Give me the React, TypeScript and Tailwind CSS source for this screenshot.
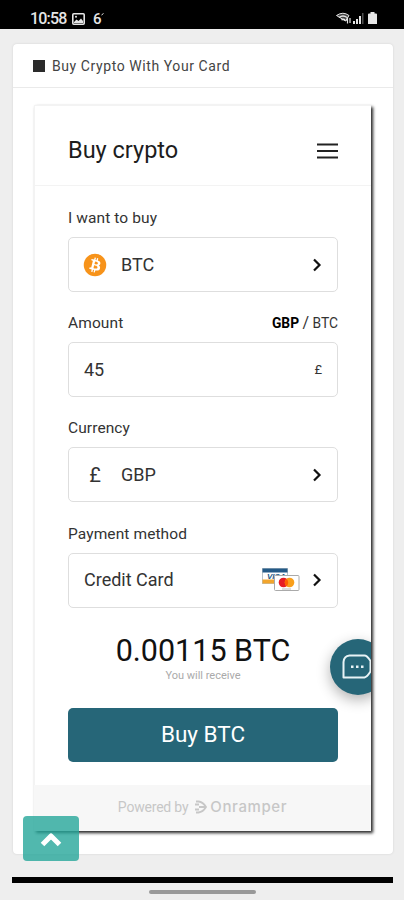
import type { ReactNode } from "react";

function Chevron() {
  return (
    <svg width="10" height="14" viewBox="0 0 10 14" fill="none" className="shrink-0">
      <path d="M2 1.5 7.5 7 2 12.5" stroke="#111" strokeWidth="2.2" />
    </svg>
  );
}

function BitcoinIcon() {
  return (
    <svg width="24" height="24" viewBox="0 0 32 32" className="-ml-px shrink-0">
      <circle cx="16" cy="16" r="15" fill="#f7931a" />
      <path
        fill="#fff"
        d="M23.19 14.02c.31-2.1-1.28-3.22-3.47-3.98l.7-2.84-1.72-.43-.7 2.76-1.38-.33.7-2.78-1.73-.43-.7 2.84-3.48-.87-.46 1.85s1.28.3 1.25.31c.7.18.83.64.8 1.01l-1.97 7.9c-.08.21-.3.53-.78.41.02.03-1.26-.31-1.26-.31L8.14 21.1l3.46.88-.72 2.87 1.73.43.71-2.84 1.38.36-.71 2.83 1.73.43.72-2.87c2.95.56 5.17.33 6.1-2.34.76-2.15-.03-3.39-1.59-4.2 1.13-.26 1.98-1 2.24-2.63Zm-3.95 5.54c-.53 2.15-4.15.99-5.32.7l.95-3.81c1.17.29 4.93.87 4.37 3.11Zm.54-5.57c-.49 1.95-3.5.96-4.47.72l.86-3.46c.97.25 4.12.7 3.61 2.74Z"
      />
    </svg>
  );
}

function CardsIcon() {
  return (
    <svg width="38" height="24" viewBox="0 0 38 24" className="shrink-0">
      <rect x="0.5" y="0.5" width="25" height="15" fill="#fff" stroke="#b9c3c9" />
      <rect x="0.5" y="0.5" width="25" height="4" fill="#245a87" />
      <rect x="0.5" y="11.5" width="13" height="4" fill="#f2a52c" />
      <text x="5" y="10.5" fontSize="8" fontStyle="italic" fontWeight="700" fill="#245a87" className="font-['Liberation_Sans',sans-serif]">
        VISA
      </text>
      <rect x="12.5" y="7.5" width="24.5" height="15" rx="1" fill="#fff" stroke="#aaa" />
      <circle cx="21.5" cy="14.5" r="4.8" fill="#e61c24" />
      <circle cx="27.5" cy="14.5" r="4.8" fill="#f99f1b" />
      <path d="M24.5 10.8a4.8 4.8 0 0 1 0 7.4 4.8 4.8 0 0 1 0-7.4" fill="#ff5f00" />
      <path d="M20 21h9" stroke="#bbb" strokeWidth="1" />
    </svg>
  );
}

function StatusBar() {
  return (
    <div className="flex h-[29px] items-start justify-between bg-black pt-[10px] pr-[26px] pl-[30px] text-[#e6e6e6]">
      <div className="flex items-center text-base leading-[18px] font-medium">
        <span className="w-[36px] tracking-[-0.8px]">10:58</span>
        <svg width="13" height="12" viewBox="0 0 13 12" className="ml-[6px]">
          <rect x="0.8" y="0.8" width="11.4" height="10.4" rx="1" fill="none" stroke="currentColor" strokeWidth="1.6" />
          <path d="M2 9 4.500 6.500 6.500 8 9 5.500 11 8v2H2z" fill="currentColor" />
          <circle cx="4" cy="3.8" r="1" fill="currentColor" />
        </svg>
        <span className="ml-[8px] text-[15px]">6</span>
        <svg width="3" height="4" viewBox="0 0 3 4" className="-ml-px mt-[3px] self-start">
          <path d="M.5 2 2.5.5" stroke="currentColor" />
        </svg>
      </div>
      <div className="flex items-start pt-[2px]">
        <svg width="17" height="13" viewBox="0 0 17 13" fill="none" stroke="currentColor" className="-ml-px">
          <path d="M0.500 3.5Q7-1 13 3.5L9.500 9Z" fill="currentColor" fillOpacity=".3" />
          <path d="M3 5.5q4-3 8 0M5.5 8q2-1.5 3.500 0" strokeWidth="1.4" />
          <path d="m9.500 9 2-2.500v5M14 6v5" strokeWidth="1.2" />
        </svg>
        <svg width="11" height="13" viewBox="0 0 11 13" fill="currentColor">
          <path d="M0 9h2v3H0zM3 7h2v5H3zM6 4h2v8H6z" />
          <path d="M9 1h1.5v11H9z" opacity=".35" />
        </svg>
        <svg width="9" height="13" viewBox="0 0 9 13" className="mr-px ml-[4px]" fill="currentColor">
          <path d="M2.5 0h4v1.5H8a1 1 0 0 1 1 1V12H0V2.5a1 1 0 0 1 1-1h1.5z" />
        </svg>
      </div>
    </div>
  );
}

function Field({ label, extra, children }: { label: string; extra?: ReactNode; children: ReactNode }) {
  return (
    <div className="h-[105.2px]">
      <div className="flex h-[30px] items-start justify-between text-[15.5px] leading-[22px] text-[#333]">
        <span className="tracking-[0.1px]">{label}</span>
        {extra}
      </div>
      <div className="flex h-[55px] items-center rounded-[5px] border border-[#dedede] pr-[15px] pl-[15px] text-lg text-[#333]">
        {children}
      </div>
    </div>
  );
}

function Widget() {
  return (
    <div className="relative mt-[17px] ml-[21px] flex h-[726px] w-[337px] flex-col bg-white shadow-[2px_2px_3px_#222]">
      <div className="flex h-[81px] items-center justify-between border-t border-b border-l border-[#f3f3f3] pt-[11px] pr-[33px] pl-[33px]">
        <h1 className="text-[23.5px] text-[#1d1d1d]">Buy crypto</h1>
        <svg width="21" height="18" viewBox="0 0 21 18" stroke="#222" strokeWidth="2.2">
          <path d="M0 2.500h21M0 9h21M0 15.500h21" />
        </svg>
      </div>

      <div className="flex-1 border-l border-[#f3f3f3] pt-[21px] pr-[33px] pl-[33px]">
        <Field label="I want to buy">
          <BitcoinIcon />
          <span className="ml-[14px] flex-1">BTC</span>
          <Chevron />
        </Field>
        <Field
          label="Amount"
          extra={
            <span className="text-[13.8px] leading-[22px]">
              <b className="text-black">GBP</b> <span className="text-base leading-none">/</span> BTC
            </span>
          }
        >
          <span className="flex-1">45</span>
          <span className="text-[13px]">£</span>
        </Field>
        <Field label="Currency">
          <span className="w-[22px] text-center text-xl">£</span>
          <span className="ml-[15px] flex-1">GBP</span>
          <Chevron />
        </Field>
        <Field label="Payment method">
          <span className="flex-1">Credit Card</span>
          <CardsIcon />
          <span className="ml-[12px]">
            <Chevron />
          </span>
        </Field>

        <div className="h-[80.2px] text-center">
          <div className="pt-[4px] text-[30.5px] leading-[38px] text-[#111]">0.00115 BTC</div>
          <div className="text-[11px] leading-[11px] text-[#aaa]">You will receive</div>
        </div>
        <button className="h-[54px] w-full rounded-[5px] bg-[#266678] text-[22.5px] text-white">Buy BTC</button>
      </div>

      <div className="flex h-[46px] items-center justify-center bg-[#f7f7f7] pb-[3px] text-sm text-[#c7c7c7]">
        <span className="tracking-[-0.2px]">Powered by</span>
        <svg width="13" height="14" viewBox="0 0 13 14" fill="none" stroke="currentColor" strokeWidth="1.8" className="ml-[6px]">
          <path d="M2 1.5h2.500Q9 2 12 7 9 12 4.500 12.500H2M5 7h7M1 4.500h4M1 9.500h4" />
        </svg>
        <span className="ml-[3px] font-[Inter,sans-serif] text-[15px] font-medium tracking-[0.6px]">Onramper</span>
      </div>

      {/* Chat launcher, cut off by the widget's right edge */}
      <div className="pointer-events-none absolute top-[500px] right-0 bottom-[46px] w-[90px] overflow-hidden">
        <div className="absolute top-[33.5px] left-[48.5px] flex size-[56px] items-center justify-center rounded-full bg-[#266678] shadow-[0_5px_14px_rgba(0,0,0,0.3)]">
          <svg width="30" height="25" viewBox="0 0 30 25" fill="none" className="-ml-[2px]">
            <path d="M1.5 23.500V8Q2 2 7.5 1.5h15Q25 1.5 28.5 7v10.5Q25 23 22.5 23.5Z" stroke="#e8f3f6" strokeWidth="2" strokeLinejoin="round" />
            <path d="M9 11.5h2.5v2.5H9zM14 11.5h2.5v2.5H14zM19 11.5h2.5v2.5H19z" fill="#e8f3f6" />
          </svg>
        </div>
      </div>
    </div>
  );
}

export default function App() {
  return (
    <div className="relative h-[900px] w-[404px] overflow-hidden bg-[#eeeeee] font-[Roboto,sans-serif]">
      <StatusBar />
      <main className="mt-[15px] ml-[13px] h-[810px] w-[380px] rounded-[4px] bg-white shadow-[0_0_2px_#ccc]">
        <div className="flex h-[44px] items-center border-b border-[#eaeaea] pl-[20px]">
          <span className="size-[12px] bg-[#2b2b2b]" />
          <span className="ml-[7px] text-sm tracking-[0.58px] text-[#444]">Buy Crypto With Your Card</span>
        </div>
        <Widget />
      </main>
      <div className="mt-[23px] ml-[12px] h-[6px] w-[381px] bg-black" />
      <div className="mt-[7px] ml-[149px] h-[4px] w-[107px] rounded-full bg-[#999]" />

      <button className="absolute top-[816px] left-[23px] flex h-[45px] w-[56px] items-center justify-center rounded-[4px] bg-[#26a69a]/80">
        <svg width="24" height="16" viewBox="0 0 24 16" fill="none" className="mt-[3px]">
          <path d="m3.500 12.500 8.500-8.500 8.500 8.500" stroke="#fff" strokeWidth="5" strokeLinejoin="round" />
        </svg>
      </button>
    </div>
  );
}
